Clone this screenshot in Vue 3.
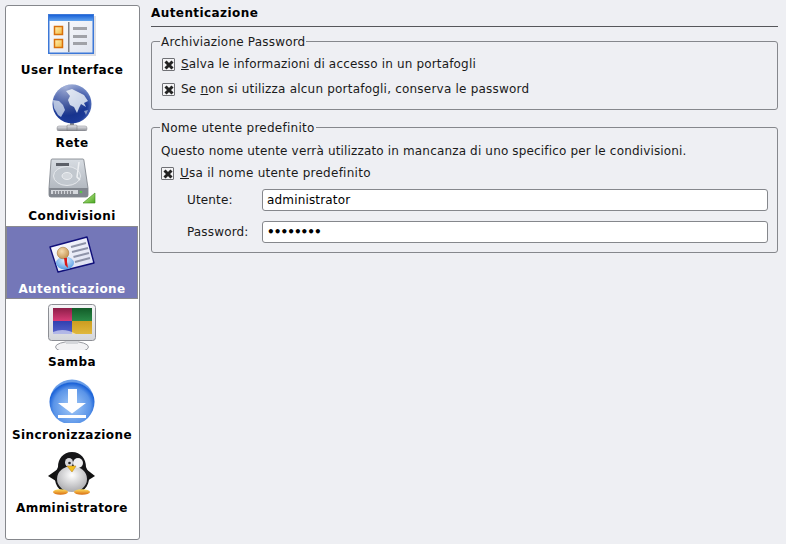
<script setup>
const user = "administrator";
const pass = "12345678";
</script>

<template>
  <div class="page">
    <nav class="side">
      <div class="item">
        <svg class="ico" width="48" height="48" viewBox="0 0 48 48">
          <defs>
            <linearGradient id="uiTitle" x1="0" y1="0" x2="0" y2="1"><stop offset="0" stop-color="#1a62d8" /><stop offset="1" stop-color="#62a4ee" /></linearGradient>
            <linearGradient id="uiBody" x1="0" y1="0" x2="1" y2="1"><stop offset="0" stop-color="#ffffff" /><stop offset="1" stop-color="#dfe4ef" /></linearGradient>
            <linearGradient id="uiBox" x1="0" y1="0" x2="1" y2="1"><stop offset="0" stop-color="#fff3b8" /><stop offset="1" stop-color="#f3b73c" /></linearGradient>
          </defs>
          <rect x="2" y="6" width="46" height="40" fill="#c9ccd4" opacity="0.6" />
          <rect x="0.75" y="4.75" width="44.5" height="38.5" fill="url(#uiBody)" stroke="#3c78d8" stroke-width="1.5" />
          <rect x="1" y="5" width="44" height="6" fill="url(#uiTitle)" />
          <rect x="20" y="12" width="1.5" height="30" fill="#7d8088" />
          <rect x="6.5" y="16.5" width="8" height="8" fill="url(#uiBox)" stroke="#d8700c" stroke-width="1.5" />
          <rect x="6.5" y="29.5" width="8" height="8" fill="url(#uiBox)" stroke="#d8700c" stroke-width="1.5" />
          <rect x="25" y="17" width="14" height="3" fill="#a0a2a8" />
          <rect x="25" y="25" width="14" height="3" fill="#a0a2a8" />
          <rect x="25" y="32" width="14" height="3" fill="#a0a2a8" />
        </svg>
        <span class="lbl">User Interface</span>
      </div>

      <div class="item">
        <svg class="ico" width="48" height="48" viewBox="0 0 48 48">
          <defs>
            <radialGradient id="glb" cx="0.45" cy="0.55" r="0.62"><stop offset="0" stop-color="#102a80" /><stop offset="0.7" stop-color="#1c3a98" /><stop offset="1" stop-color="#6a86c8" /></radialGradient>
            <radialGradient id="glbTop" cx="0.35" cy="0.1" r="0.7"><stop offset="0" stop-color="#ffffff" stop-opacity="0.55" /><stop offset="1" stop-color="#ffffff" stop-opacity="0" /></radialGradient>
            <linearGradient id="pipe" x1="0" y1="0" x2="0" y2="1"><stop offset="0" stop-color="#e8e8ec" /><stop offset="1" stop-color="#84878e" /></linearGradient>
          </defs>
          <rect x="22" y="38" width="4" height="6" fill="#8a8c92" />
          <rect x="9" y="43" width="30" height="5" rx="2" fill="url(#pipe)" stroke="#85878d" stroke-width="0.5" />
          <rect x="19" y="42" width="10" height="6" rx="1" fill="url(#pipe)" stroke="#777" stroke-width="0.5" />
          <circle cx="24" cy="21" r="19.5" fill="url(#glb)" />
          <path d="M18 8 L24 6 L30 9 L36 12 L40 18 L36 20 L38 24 L33 21 L31 25 L29 30 L26 24 L22 22 L20 17 L22 13 Z" fill="#c4d0e6" />
          <path d="M5 17 L11 18 L15 22 L17 27 L13 34 L10 32 L6 25 Z" fill="#a6b6d8" />
          <path d="M36 28 L40 27 L38 32 Z" fill="#8a9cc6" />
          <circle cx="24" cy="21" r="19.5" fill="url(#glbTop)" />
        </svg>
        <span class="lbl">Rete</span>
      </div>

      <div class="item">
        <svg class="ico" width="48" height="48" viewBox="0 0 48 48">
          <defs>
            <linearGradient id="hd" x1="0" y1="0" x2="0" y2="1"><stop offset="0" stop-color="#d8dde3" /><stop offset="1" stop-color="#a8aeb6" /></linearGradient>
            <linearGradient id="hdTri" x1="0" y1="0" x2="1" y2="1"><stop offset="0" stop-color="#d4f2a0" /><stop offset="1" stop-color="#4aa822" /></linearGradient>
          </defs>
          <path d="M4 3 L35 3 Q36 3 36 5 L40 32 L40 39 Q40 41 38 41 L3 41 Q1 41 1 39 L1 32 L3 5 Q3 3 4 3 Z" fill="url(#hd)" stroke="#7a7f87" stroke-width="0.8" />
          <path d="M1 32 L40 32 L40 39 Q40 41 38 41 L3 41 Q1 41 1 39 Z" fill="#81868e" />
          <rect x="3" y="34" width="27" height="4" fill="#d4d7dc" />
          <path d="M6 35 V38 M9 35 V38 M12 35 V38 M15 35 V38 M18 35 V38 M21 35 V38 M24 35 V38" stroke="#4a4d54" stroke-width="1" />
          <circle cx="33" cy="36" r="1.3" fill="#58c848" />
          <rect x="8" y="7" width="13" height="3" fill="#5c6068" />
          <ellipse cx="19" cy="20" rx="13.5" ry="9.5" fill="#c2c8cf" stroke="#e6e9ed" />
          <ellipse cx="19" cy="20" rx="5" ry="3.5" fill="#d4d8dd" stroke="#eceef1" />
          <path d="M31 6 L29 21 L32 24" fill="none" stroke="#eef0f3" stroke-width="1.5" />
          <path d="M47 37 L47 47 L35 47 Z" fill="url(#hdTri)" stroke="#3a8a18" stroke-width="0.6" />
        </svg>
        <span class="lbl">Condivisioni</span>
      </div>

      <div class="item active">
        <svg class="ico" width="48" height="48" viewBox="0 0 48 48">
          <defs>
            <linearGradient id="card" x1="0" y1="0" x2="1" y2="1"><stop offset="0" stop-color="#ffffff" /><stop offset="1" stop-color="#d6daf0" /></linearGradient>
            <radialGradient id="face" cx="0.4" cy="0.35" r="0.7"><stop offset="0" stop-color="#f6dcb0" /><stop offset="1" stop-color="#c4924e" /></radialGradient>
            <radialGradient id="shirt" cx="0.5" cy="0.3" r="0.8"><stop offset="0" stop-color="#e0f0ff" /><stop offset="1" stop-color="#3f8ee0" /></radialGradient>
          </defs>
          <path d="M2 18 L39 8 L46 34 L10 43 Z" fill="url(#card)" stroke="#10107a" stroke-width="1.4" stroke-linejoin="round" />
          <path d="M23 18 L38 14 M24 23 L40 19 M25.5 28 L41 24 M27 33 L42 29" stroke="#8e93a8" stroke-width="2" />
          <ellipse cx="17" cy="34" rx="9" ry="6.5" fill="url(#shirt)" />
          <circle cx="15" cy="24" r="5.8" fill="url(#face)" stroke="#9a6a2e" stroke-width="0.5" />
          <path d="M16 29 L19 29 L19 33 L20 39 L17 36 Z" fill="#d81818" />
        </svg>
        <span class="lbl">Autenticazione</span>
      </div>

      <div class="item">
        <svg class="ico" width="48" height="48" viewBox="0 0 48 48">
          <defs>
            <linearGradient id="mon" x1="0" y1="0" x2="0" y2="1"><stop offset="0" stop-color="#f6f6f8" /><stop offset="1" stop-color="#d4d6da" /></linearGradient>
            <linearGradient id="qRed" x1="0" y1="0" x2="0" y2="1"><stop offset="0" stop-color="#8c1e48" /><stop offset="1" stop-color="#d83c78" /></linearGradient>
            <linearGradient id="qGreen" x1="0" y1="0" x2="0" y2="1"><stop offset="0" stop-color="#125c28" /><stop offset="1" stop-color="#2a8a48" /></linearGradient>
            <linearGradient id="qBlue" x1="0" y1="0" x2="0" y2="1"><stop offset="0" stop-color="#3040b0" /><stop offset="1" stop-color="#5864cc" /></linearGradient>
            <linearGradient id="qYellow" x1="0" y1="0" x2="0" y2="1"><stop offset="0" stop-color="#cc9c20" /><stop offset="1" stop-color="#e0b83c" /></linearGradient>
          </defs>
          <ellipse cx="24" cy="45" rx="16.5" ry="5.5" fill="#f2f2f4" stroke="#9a9ca2" />
          <rect x="18" y="38" width="12" height="4" fill="#d4d6da" />
          <rect x="0.5" y="2.5" width="47" height="36" rx="3" fill="url(#mon)" stroke="#8c8e94" />
          <rect x="5" y="6" width="19" height="13" fill="url(#qRed)" />
          <rect x="24" y="6" width="20" height="13" fill="url(#qGreen)" />
          <rect x="5" y="19" width="19" height="13" fill="url(#qBlue)" />
          <rect x="24" y="19" width="20" height="13" fill="url(#qYellow)" />
          <path d="M5 32 L5 30 Q16 25 28 32 Z" fill="#fff" opacity="0.55" />
        </svg>
        <span class="lbl">Samba</span>
      </div>

      <div class="item">
        <svg class="ico" width="48" height="48" viewBox="0 0 48 48">
          <defs>
            <radialGradient id="syn" cx="0.5" cy="0.6" r="0.55"><stop offset="0" stop-color="#a6ccf8" /><stop offset="0.75" stop-color="#5a94e8" /><stop offset="0.95" stop-color="#1a62d8" /><stop offset="1" stop-color="#6a9ee8" /></radialGradient>
          </defs>
          <circle cx="24" cy="27" r="22.5" fill="url(#syn)" />
          <path d="M20 14 H29 V28 H38 L24 38.5 L10 28 H20 Z" fill="#fff" />
          <rect x="10" y="40" width="28" height="3" fill="#fff" />
        </svg>
        <span class="lbl">Sincronizzazione</span>
      </div>

      <div class="item">
        <svg class="ico" width="48" height="48" viewBox="0 0 48 48">
          <defs>
            <radialGradient id="belly" cx="0.5" cy="0.35" r="0.7"><stop offset="0" stop-color="#ffffff" /><stop offset="1" stop-color="#a4a4a8" /></radialGradient>
            <linearGradient id="foot" x1="0" y1="0" x2="0" y2="1"><stop offset="0" stop-color="#ffe060" /><stop offset="1" stop-color="#d86a10" /></linearGradient>
          </defs>
          <path d="M10 21 L0 28 L8 33 Z" fill="#111" />
          <path d="M38 21 L47 28 L39 33 Z" fill="#111" />
          <path d="M24 4 C33 4 38 11 38 19 C43 28 42 38 34 43 L14 43 C6 38 5 28 10 19 C10 11 15 4 24 4 Z" fill="#161618" />
          <ellipse cx="24" cy="31" rx="15" ry="13" fill="url(#belly)" />
          <ellipse cx="21" cy="14.5" rx="4" ry="4.5" fill="#d8d8dc" />
          <ellipse cx="30" cy="15" rx="5" ry="5" fill="#f0f0f2" />
          <circle cx="21.5" cy="15" r="1.3" fill="#222" />
          <path d="M19 18 L28 18 L24 24 Z" fill="#f2c020" stroke="#b87c10" stroke-width="0.5" />
          <ellipse cx="12.5" cy="44" rx="7.5" ry="2.8" fill="url(#foot)" />
          <ellipse cx="34" cy="44" rx="8" ry="2.8" fill="url(#foot)" />
        </svg>
        <span class="lbl">Amministratore</span>
      </div>
    </nav>

    <main class="main">
      <div class="title">Autenticazione</div>

      <fieldset class="group first">
        <legend>Archiviazione Password</legend>
        <label class="check">
          <span class="box"><svg width="10" height="10" viewBox="0 0 10 10"><path d="M1.5 1.5 L8.5 8.5 M8.5 1.5 L1.5 8.5" stroke="#222" stroke-width="3" /></svg></span>
          <span><u>S</u>alva le informazioni di accesso in un portafogli</span>
        </label>
        <label class="check gap">
          <span class="box"><svg width="10" height="10" viewBox="0 0 10 10"><path d="M1.5 1.5 L8.5 8.5 M8.5 1.5 L1.5 8.5" stroke="#222" stroke-width="3" /></svg></span>
          <span>Se <u>n</u>on si utilizza alcun portafogli, conserva le password</span>
        </label>
      </fieldset>

      <fieldset class="group second">
        <legend>Nome utente predefinito</legend>
        <div class="note">Questo nome utente verrà utilizzato in mancanza di uno specifico per le condivisioni.</div>
        <label class="check use">
          <span class="box"><svg width="10" height="10" viewBox="0 0 10 10"><path d="M1.5 1.5 L8.5 8.5 M8.5 1.5 L1.5 8.5" stroke="#222" stroke-width="3" /></svg></span>
          <span><u>U</u>sa il nome utente predefinito</span>
        </label>
        <div class="field first-field">
          <span class="flbl">Utente:</span>
          <input class="inp" type="text" :value="user" />
        </div>
        <div class="field">
          <span class="flbl">Password:</span>
          <input class="inp pw" type="password" :value="pass" />
        </div>
      </fieldset>
    </main>
  </div>
</template>

<style>
html,
body {
  margin: 0;
  background: #eeeff3;
}
</style>

<style scoped>
.page {
  width: 786px;
  height: 544px;
  box-sizing: border-box;
  padding: 5px 8px 4px 5px;
  display: flex;
  gap: 10px;
  background: #eeeff3;
  color: #000;
  font-family: "DejaVu Sans", sans-serif;
  font-size: 12px;
  letter-spacing: 0.16px;
  overflow: hidden;
}
.side {
  width: 135px;
  box-sizing: border-box;
  padding: 1px 1px 0 0;
  background: #fff;
  border: 1px solid #85878c;
  border-radius: 3px;
  flex: none;
}
.item {
  height: 73px;
  box-sizing: border-box;
  padding-top: 3px;
  display: flex;
  flex-direction: column;
  align-items: center;
}
.item.active {
  background: #7477b8;
  color: #fff;
  outline: 1px solid #8a8a90;
  outline-offset: -1px;
}
.ico {
  display: block;
  flex: none;
}
.lbl {
  margin-top: 4px;
  line-height: 16px;
  font-weight: 700;
  letter-spacing: 0.42px;
  white-space: nowrap;
}
.main {
  flex: 1;
  min-width: 0;
  padding-left: 1px;
}
.title {
  height: 20px;
  padding-top: 1px;
  line-height: 15px;
  font-weight: 700;
  letter-spacing: 0.42px;
  border-bottom: 1px solid #55565a;
  margin-bottom: 7px;
}
.group {
  margin: 0;
  padding: 0 9px 0 10px;
  border: 1px solid #85878c;
  border-radius: 3px;
  box-sizing: border-box;
  min-width: 0;
}
.group legend {
  height: 15px;
  padding: 0 1px;
  margin-left: -2px;
  line-height: 17px;
  letter-spacing: 0.2px;
  color: #1a1a1a;
}
.group.first {
  height: 76px;
  margin-bottom: 10px;
}
.group.second {
  height: 133px;
  padding-left: 9px;
}
.group.second legend {
  margin-left: -1px;
  letter-spacing: 0.26px;
}
.check {
  display: flex;
  align-items: center;
  gap: 6px;
  height: 15px;
  line-height: 15px;
  color: #1a1a1a;
}
.first .check {
  margin-top: 8px;
}
.first .check.gap {
  margin-top: 10px;
  letter-spacing: 0.21px;
}
.box {
  width: 11px;
  height: 11px;
  flex: none;
  border: 1px solid #6f7075;
  border-radius: 1px;
  background: #f4f4f6;
  display: flex;
  align-items: center;
  justify-content: center;
}
.note {
  margin-top: 9px;
  line-height: 15px;
  color: #1a1a1a;
}
.use {
  margin-top: 7px;
  letter-spacing: 0.26px;
}
.field {
  display: flex;
  align-items: center;
  margin-top: 10px;
  padding-left: 26px;
}
.first-field {
  margin-top: 8px;
}
.flbl {
  width: 75px;
  flex: none;
  color: #1a1a1a;
}
.inp {
  flex: 1;
  min-width: 0;
  height: 22px;
  box-sizing: border-box;
  padding: 0 4px;
  border: 1px solid #85878c;
  border-radius: 3px;
  background: #fff;
  font-family: "DejaVu Sans", sans-serif;
  font-size: 12px;
  letter-spacing: 0.16px;
  color: #000;
  outline: none;
}
.pw {
  font-weight: 700;
  letter-spacing: -0.95px;
}
</style>
